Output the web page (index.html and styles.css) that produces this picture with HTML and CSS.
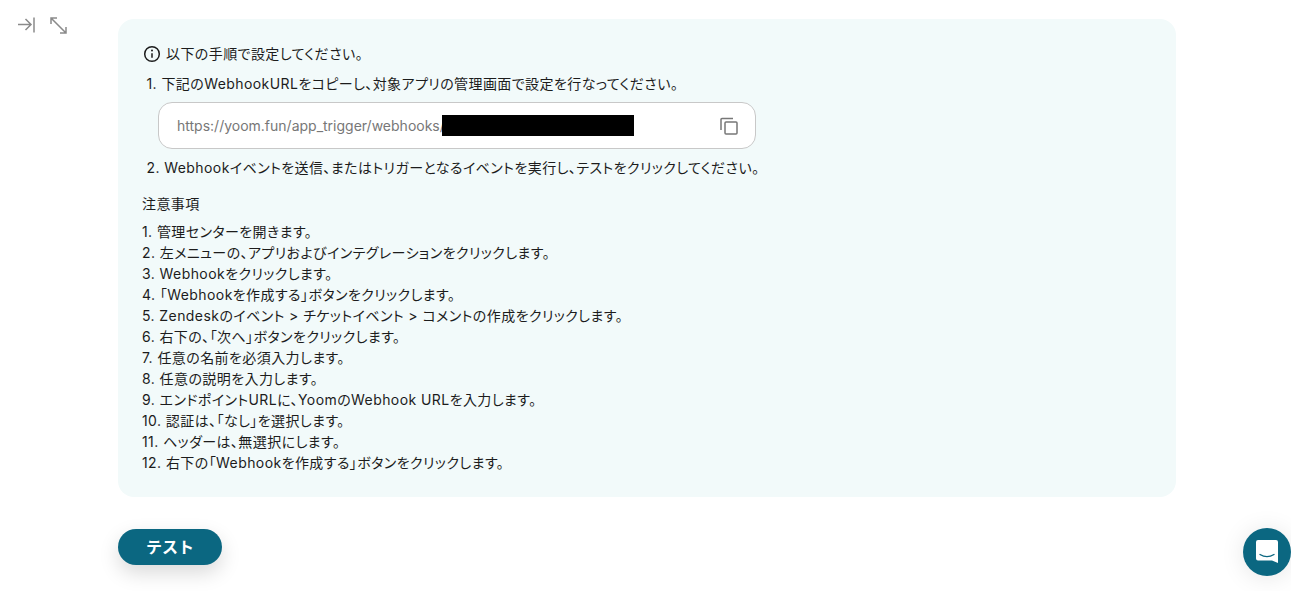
FILE: index.html
```html
<!DOCTYPE html>
<html lang="ja">
<head>
    <meta charset="UTF-8">
    <title>Webhook設定</title>
    <link rel="stylesheet" href="styles.css">
</head>
<body>
    <div class="page">
        <div class="rail">
            <svg class="rail-icon" width="20" height="20" viewBox="0 0 20 20"><path d="M2 9.500h13M9.500 4l5.500 5.500-5.500 5.500M18 2.500v15"/></svg>
            <svg class="rail-icon" width="20" height="20" viewBox="0 0 20 20"><path d="M3 3l15 15M3 9V3h6M18 12v6h-6"/></svg>
        </div>
        <main class="content">
            <section class="panel">
                <p class="lead">
                    <svg class="info-icon" width="18" height="18" viewBox="0 0 18 18"><circle cx="9" cy="9" r="7.300"/><path d="M9 8.200v4.600"/><circle class="dot" cx="9" cy="5.600" r="1"/></svg>
                    <span class="lead-text">以下の手順で設定してください。</span>
                </p>
                <p class="step">1. 下記のWebhookURLをコピーし、対象アプリの管理画面で設定を行なってください。</p>
                <div class="url-box">
                    <span class="url-text">https://yoom.fun/app_trigger/webhooks/</span><span class="redacted"></span>
                    <svg class="copy-icon" width="20" height="20" viewBox="0 0 20 20"><path d="M2 14V3.500a1 1 0 0 1 1-1h11"/><rect x="6" y="6" width="12" height="12" rx="1"/></svg>
                </div>
                <p class="step step-two">2. Webhookイベントを送信、またはトリガーとなるイベントを実行し、テストをクリックしてください。</p>
                <p class="notes-title">注意事項</p>
                <ol class="notes">
                    <li>1. 管理センターを開きます。</li>
                    <li>2. 左メニューの、アプリおよびインテグレーションをクリックします。</li>
                    <li>3. Webhookをクリックします。</li>
                    <li>4. 「Webhookを作成する」ボタンをクリックします。</li>
                    <li>5. Zendeskのイベント &gt; チケットイベント &gt; コメントの作成をクリックします。</li>
                    <li>6. 右下の、「次へ」ボタンをクリックします。</li>
                    <li>7. 任意の名前を必須入力します。</li>
                    <li>8. 任意の説明を入力します。</li>
                    <li>9. エンドポイントURLに、YoomのWebhook URLを入力します。</li>
                    <li>10. 認証は、「なし」を選択します。</li>
                    <li>11. ヘッダーは、無選択にします。</li>
                    <li>12. 右下の「Webhookを作成する」ボタンをクリックします。</li>
                </ol>
            </section>
            <button class="test-button">テスト</button>
        </main>
    </div>
    <button class="chat-button" aria-label="チャット">
        <svg width="24" height="26" viewBox="0 0 24 26"><path class="bubble" d="M3 1h18a2 2 0 0 1 2 2v21l-6-2.500H3a2 2 0 0 1-2-2V3a2 2 0 0 1 2-2z"/><path class="smile" d="M5 15.500c4.300 2.600 9.700 2.600 14 0"/></svg>
    </button>
</body>
</html>
```

FILE: styles.css
```css
html, body {
    margin: 0;
    padding: 0;
    height: 100%;
    overflow: hidden;
    background: #fff;
    font-family: "Inter", "Noto Sans CJK JP", sans-serif;
    color: #1c1c1c;
}

.page {
    display: flex;
    align-items: flex-start;
}

.rail {
    width: 118px;
    flex: none;
    display: flex;
    gap: 12px;
    padding: 15px 0 0 16px;
    box-sizing: border-box;
}

.rail-icon {
    fill: none;
    stroke: #8a8a8a;
    stroke-width: 1.5;
}

.content {
    width: 1058px;
    padding-top: 19px;
}

.panel {
    background: #f2fafa;
    border-radius: 16px;
    height: 478px;
    box-sizing: border-box;
    padding: 26px 24px 0;
    font-size: 14px;
    font-feature-settings: "palt";
    letter-spacing: 0.03em;
}

.panel p {
    margin: 0;
}

.lead {
    display: flex;
    align-items: center;
    gap: 5px;
    height: 18px;
    padding-left: 1px;
}

.lead-text {
    margin-top: -2px;
}

.info-icon {
    fill: none;
    stroke: #1c1c1c;
    stroke-width: 1.5;
}

.info-icon .dot {
    fill: #1c1c1c;
    stroke: none;
}

.step {
    line-height: 20px;
    padding-left: 4.5px;
    margin-top: 11px !important;
}

.url-box {
    display: flex;
    align-items: center;
    width: 598px;
    height: 47px;
    margin: 8px 0 0 16px;
    padding: 0 16px 0 18px;
    box-sizing: border-box;
    background: #fff;
    border: 1px solid #c8c8c8;
    border-radius: 14px;
}

.url-text {
    font-size: 14px;
    color: #777;
    letter-spacing: 0;
}

.redacted {
    width: 192px;
    height: 21px;
    margin-left: -3px;
    background: #000;
}

.copy-icon {
    margin-left: auto;
    fill: none;
    stroke: #777;
    stroke-width: 1.5;
}

.step-two {
    margin-top: 9px !important;
}

.notes-title {
    margin-top: 16px !important;
    line-height: 20px;
}

.notes {
    list-style: none;
    margin: 7px 0 0;
    padding: 0;
    line-height: 21px;
}

.test-button {
    display: block;
    width: 104px;
    height: 36px;
    margin-top: 32px;
    padding: 0 0 2px;
    border: none;
    border-radius: 18px;
    background: #0b6781;
    color: #fff;
    font-family: inherit;
    font-size: 16px;
    font-weight: 700;
    box-shadow: 0 8px 20px rgba(0, 0, 0, 0.15);
}

.chat-button {
    position: fixed;
    right: 0;
    bottom: 15px;
    width: 48px;
    height: 48px;
    padding: 0;
    border: none;
    border-radius: 50%;
    background: #0b6781;
    display: flex;
    align-items: center;
    justify-content: center;
    box-shadow: 0 2px 24px rgba(0, 0, 0, 0.1);
}

.bubble {
    fill: #fff;
}

.smile {
    fill: none;
    stroke: #0b6781;
    stroke-width: 1.4;
    stroke-linecap: round;
}
```
